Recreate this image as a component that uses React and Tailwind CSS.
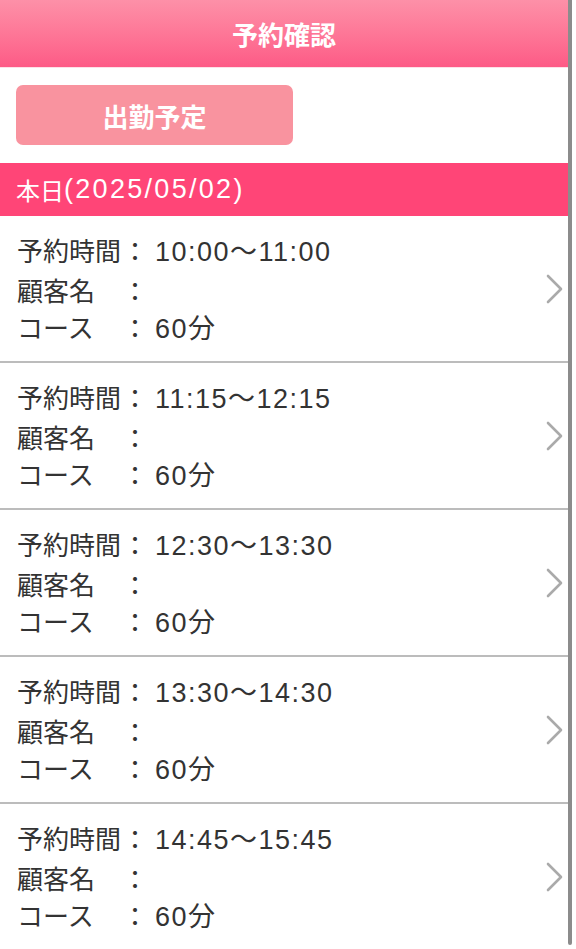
import React from "react";

const rows = [
  { time: "10:00～11:00", name: "" },
  { time: "11:15～12:15", name: "" },
  { time: "12:30～13:30", name: "" },
  { time: "13:30～14:30", name: "" },
  { time: "14:45～15:45", name: "" },
];

const LATIN = { fontFamily: '"Liberation Sans", "Noto Sans CJK JP", sans-serif' };

function Chevron() {
  return (
    <svg width="18" height="30" viewBox="0 0 18 30" className="shrink-0">
      <path d="M2 2 L15 15 L2 28" fill="none" stroke="#aaaaaa" strokeWidth="2.6" strokeLinecap="round" strokeLinejoin="round" />
    </svg>
  );
}

function Row({ time }) {
  return (
    <div className="h-[147px] border-b-2 border-[#bcbcbc] flex items-center pl-[17px] pr-[4px]">
      <div className="flex-1 text-[26px] leading-[37px] text-[#333333] pt-[2px]">
        <div className="flex items-baseline">
          <span className="w-[105px] inline-block">予約時間</span>
          <span className="w-[26px] inline-block text-center">：</span>
          <span className="ml-[7px] text-[27px] tracking-[1.5px]" style={LATIN}>{time}</span>
        </div>
        <div className="flex items-baseline">
          <span className="w-[105px] inline-block">顧客名</span>
          <span className="w-[26px] inline-block text-center">：</span>
        </div>
        <div className="flex items-baseline">
          <span className="w-[105px] inline-block">コース</span>
          <span className="w-[26px] inline-block text-center">：</span>
          <span className="ml-[7px] text-[27px] tracking-[1.5px]" style={LATIN}>60分</span>
        </div>
      </div>
      <Chevron />
    </div>
  );
}

export default function App() {
  return (
    <div
      className="relative w-[576px] h-[949px] overflow-hidden bg-white"
      style={{ fontFamily: '"Noto Sans CJK JP", "Noto Sans", sans-serif' }}
    >
      <div className="w-[568px]">
        <div className="h-[68px] bg-gradient-to-b from-[#fd90a8] to-[#fd5a86] flex items-center justify-center text-white text-[26px] font-bold border-b border-[#fde0e7]">
          予約確認
        </div>
        <div className="pt-[17px] pb-[18px] px-[16px]">
          <div className="w-[277px] h-[60px] rounded-[7px] bg-[#f9939f] flex items-center justify-center text-white text-[26px] font-bold">
            出勤予定
          </div>
        </div>
        <div className="h-[53px] bg-[#ff4577] flex items-center px-[16px] text-white text-[24px]">
          本日<span className="text-[27px] tracking-[2.3px]" style={LATIN}>(2025/05/02)</span>
        </div>
        {rows.map((r, i) => (
          <Row key={i} time={r.time} />
        ))}
      </div>
      <div className="absolute left-[568px] top-0 w-[4px] h-[945px] rounded-b-full bg-black/45" />
    </div>
  );
}
